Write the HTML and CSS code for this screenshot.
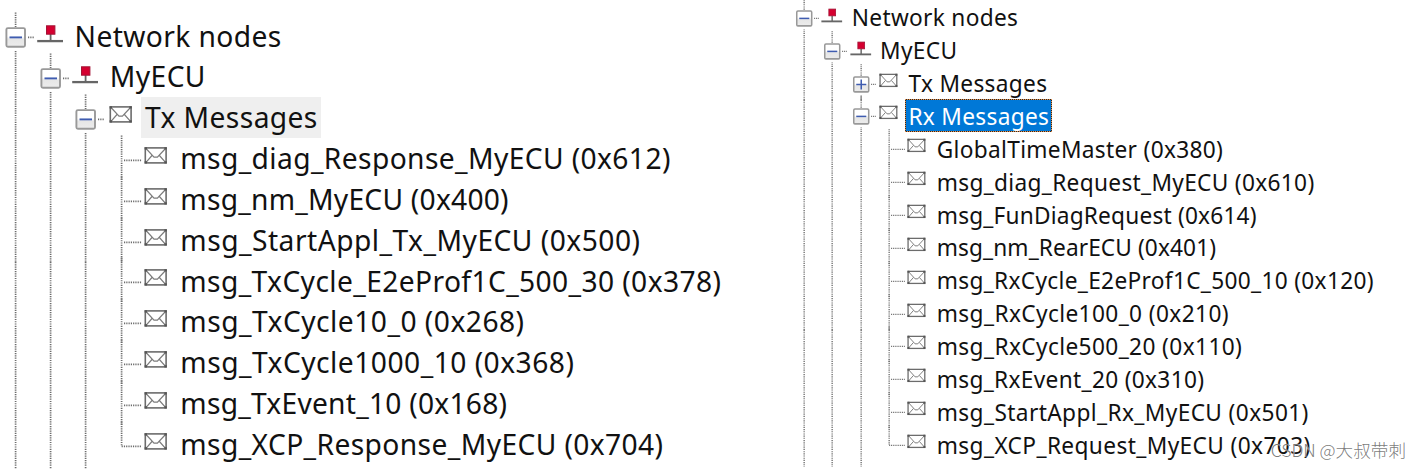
FILE: index.html
```
<!DOCTYPE html>
<html lang="en">
<head>
<meta charset="utf-8">
<title>Network nodes</title>
<link rel="stylesheet" href="styles.css">
</head>
<body>
<svg class="defs" width="0" height="0">
  <defs>
    <linearGradient id="face" x1="0" y1="0" x2="0" y2="1"><stop offset="0.45" stop-color="#fff"/><stop offset="0.6" stop-color="#e6e6e6"/><stop offset="1" stop-color="#ececec"/></linearGradient>
    <symbol id="line" viewBox="0 0 35.25 40.85" overflow="visible"><path class="dots" d="M17.6 0V40.85"/></symbol>
    <symbol id="leaf" viewBox="0 0 35.25 40.85" overflow="visible"><path class="dots" d="M17.6-4.54V40.85M20 20.4H37.5"/></symbol>
    <symbol id="last" viewBox="0 0 35.25 40.85" overflow="visible"><path class="dots" d="M17.6-4.54V20.4M17.6 20.4H37.5"/></symbol>
    <symbol id="minus" viewBox="0 0 35.25 40.85" overflow="visible"><path class="dots" d="M17.6-4.54V10M17.6 34.04V40.85M30 20.4H36"/><rect x="8.4" y="11.1" width="18.6" height="18.6" rx="1.5" fill="url(#face)" stroke="#999" stroke-width="1.9"/><path d="M11.5 20.4H24" stroke="#3f5cb0" stroke-width="1.9"/></symbol>
    <symbol id="plus" viewBox="0 0 35.25 40.85" overflow="visible"><path class="dots" d="M17.6-4.54V10M17.6 34.04V40.85M30 20.4H36"/><rect x="8.4" y="11.1" width="18.6" height="18.6" rx="1.5" fill="url(#face)" stroke="#999" stroke-width="1.9"/><path d="M11.5 20.4H24M17.7 14.2V26.6" stroke="#3f5cb0" stroke-width="1.9"/></symbol>
    <symbol id="node" viewBox="0 0 35.25 40.85" overflow="visible"><path d="M17.6 17V23.5" stroke="#666" stroke-width="1.8"/><path d="M4.2 24.1H30" stroke="#666" stroke-width="2.3"/><rect x="13.5" y="8.8" width="8.4" height="8.4" fill="#d50030" stroke="#a31335" stroke-width="1"/></symbol>
    <symbol id="mail" viewBox="0 0 35.25 40.85" overflow="visible"><rect x="6.3" y="7.9" width="20.8" height="15" fill="#fff" stroke="#6c6c6c" stroke-width="1.6"/><path d="M7 8.5L15 17.2H18.4L26.5 8.5M7 22.3L13 15.5M26.5 22.3L20.4 15.5" fill="none" stroke="#7c7c7c" stroke-width="1.2"/><path d="M5.6 7.2h2.4v2.4h-2.4zM25.4 7.2h2.4v2.4h-2.4zM5.6 21.2h2.4v2.4h-2.4zM25.4 21.2h2.4v2.4h-2.4z" fill="#555"/></symbol>
  </defs>
</svg>
<main class="page">
  <section class="tree tree-tx">
    <div class="row"><svg class="cell"><use href="#minus"/></svg><svg class="cell"><use href="#node"/></svg><span class="label">Network nodes</span></div>
    <div class="row"><svg class="cell"><use href="#line"/></svg><svg class="cell"><use href="#minus"/></svg><svg class="cell"><use href="#node"/></svg><span class="label">MyECU</span></div>
    <div class="row"><svg class="cell"><use href="#line"/></svg><svg class="cell"><use href="#line"/></svg><svg class="cell"><use href="#minus"/></svg><svg class="cell"><use href="#mail"/></svg><span class="label hover">Tx Messages</span></div>
    <div class="row"><svg class="cell"><use href="#line"/></svg><svg class="cell"><use href="#line"/></svg><svg class="cell"><use href="#line"/></svg><svg class="cell"><use href="#leaf"/></svg><svg class="cell"><use href="#mail"/></svg><span class="label">msg_diag_Response_MyECU (0x612)</span></div>
    <div class="row"><svg class="cell"><use href="#line"/></svg><svg class="cell"><use href="#line"/></svg><svg class="cell"><use href="#line"/></svg><svg class="cell"><use href="#leaf"/></svg><svg class="cell"><use href="#mail"/></svg><span class="label narrow">msg_nm_MyECU (0x400)</span></div>
    <div class="row"><svg class="cell"><use href="#line"/></svg><svg class="cell"><use href="#line"/></svg><svg class="cell"><use href="#line"/></svg><svg class="cell"><use href="#leaf"/></svg><svg class="cell"><use href="#mail"/></svg><span class="label wide">msg_StartAppl_Tx_MyECU (0x500)</span></div>
    <div class="row"><svg class="cell"><use href="#line"/></svg><svg class="cell"><use href="#line"/></svg><svg class="cell"><use href="#line"/></svg><svg class="cell"><use href="#leaf"/></svg><svg class="cell"><use href="#mail"/></svg><span class="label">msg_TxCycle_E2eProf1C_500_30 (0x378)</span></div>
    <div class="row"><svg class="cell"><use href="#line"/></svg><svg class="cell"><use href="#line"/></svg><svg class="cell"><use href="#line"/></svg><svg class="cell"><use href="#leaf"/></svg><svg class="cell"><use href="#mail"/></svg><span class="label wide">msg_TxCycle10_0 (0x268)</span></div>
    <div class="row"><svg class="cell"><use href="#line"/></svg><svg class="cell"><use href="#line"/></svg><svg class="cell"><use href="#line"/></svg><svg class="cell"><use href="#leaf"/></svg><svg class="cell"><use href="#mail"/></svg><span class="label wide">msg_TxCycle1000_10 (0x368)</span></div>
    <div class="row"><svg class="cell"><use href="#line"/></svg><svg class="cell"><use href="#line"/></svg><svg class="cell"><use href="#line"/></svg><svg class="cell"><use href="#leaf"/></svg><svg class="cell"><use href="#mail"/></svg><span class="label narrow">msg_TxEvent_10 (0x168)</span></div>
    <div class="row"><svg class="cell"><use href="#line"/></svg><svg class="cell"><use href="#line"/></svg><svg class="cell"><use href="#line"/></svg><svg class="cell"><use href="#last"/></svg><svg class="cell"><use href="#mail"/></svg><span class="label">msg_XCP_Response_MyECU (0x704)</span></div>
    <div class="row tail"><svg class="cell"><use href="#line"/></svg><svg class="cell"><use href="#line"/></svg><svg class="cell"><use href="#line"/></svg></div>
  </section>
  <section class="tree tree-rx">
    <div class="row"><svg class="cell"><use href="#minus"/></svg><svg class="cell"><use href="#node"/></svg><span class="label">Network nodes</span></div>
    <div class="row"><svg class="cell"><use href="#line"/></svg><svg class="cell"><use href="#minus"/></svg><svg class="cell"><use href="#node"/></svg><span class="label">MyECU</span></div>
    <div class="row"><svg class="cell"><use href="#line"/></svg><svg class="cell"><use href="#line"/></svg><svg class="cell"><use href="#plus"/></svg><svg class="cell"><use href="#mail"/></svg><span class="label">Tx Messages</span></div>
    <div class="row"><svg class="cell"><use href="#line"/></svg><svg class="cell"><use href="#line"/></svg><svg class="cell"><use href="#minus"/></svg><svg class="cell"><use href="#mail"/></svg><span class="label selected">Rx Messages</span></div>
    <div class="row"><svg class="cell"><use href="#line"/></svg><svg class="cell"><use href="#line"/></svg><svg class="cell"><use href="#line"/></svg><svg class="cell"><use href="#leaf"/></svg><svg class="cell"><use href="#mail"/></svg><span class="label">GlobalTimeMaster (0x380)</span></div>
    <div class="row"><svg class="cell"><use href="#line"/></svg><svg class="cell"><use href="#line"/></svg><svg class="cell"><use href="#line"/></svg><svg class="cell"><use href="#leaf"/></svg><svg class="cell"><use href="#mail"/></svg><span class="label">msg_diag_Request_MyECU (0x610)</span></div>
    <div class="row"><svg class="cell"><use href="#line"/></svg><svg class="cell"><use href="#line"/></svg><svg class="cell"><use href="#line"/></svg><svg class="cell"><use href="#leaf"/></svg><svg class="cell"><use href="#mail"/></svg><span class="label narrow">msg_FunDiagRequest (0x614)</span></div>
    <div class="row"><svg class="cell"><use href="#line"/></svg><svg class="cell"><use href="#line"/></svg><svg class="cell"><use href="#line"/></svg><svg class="cell"><use href="#leaf"/></svg><svg class="cell"><use href="#mail"/></svg><span class="label narrower">msg_nm_RearECU (0x401)</span></div>
    <div class="row"><svg class="cell"><use href="#line"/></svg><svg class="cell"><use href="#line"/></svg><svg class="cell"><use href="#line"/></svg><svg class="cell"><use href="#leaf"/></svg><svg class="cell"><use href="#mail"/></svg><span class="label">msg_RxCycle_E2eProf1C_500_10 (0x120)</span></div>
    <div class="row"><svg class="cell"><use href="#line"/></svg><svg class="cell"><use href="#line"/></svg><svg class="cell"><use href="#line"/></svg><svg class="cell"><use href="#leaf"/></svg><svg class="cell"><use href="#mail"/></svg><span class="label wide">msg_RxCycle100_0 (0x210)</span></div>
    <div class="row"><svg class="cell"><use href="#line"/></svg><svg class="cell"><use href="#line"/></svg><svg class="cell"><use href="#line"/></svg><svg class="cell"><use href="#leaf"/></svg><svg class="cell"><use href="#mail"/></svg><span class="label wide">msg_RxCycle500_20 (0x110)</span></div>
    <div class="row"><svg class="cell"><use href="#line"/></svg><svg class="cell"><use href="#line"/></svg><svg class="cell"><use href="#line"/></svg><svg class="cell"><use href="#leaf"/></svg><svg class="cell"><use href="#mail"/></svg><span class="label">msg_RxEvent_20 (0x310)</span></div>
    <div class="row"><svg class="cell"><use href="#line"/></svg><svg class="cell"><use href="#line"/></svg><svg class="cell"><use href="#line"/></svg><svg class="cell"><use href="#leaf"/></svg><svg class="cell"><use href="#mail"/></svg><span class="label wide">msg_StartAppl_Rx_MyECU (0x501)</span></div>
    <div class="row"><svg class="cell"><use href="#line"/></svg><svg class="cell"><use href="#line"/></svg><svg class="cell"><use href="#line"/></svg><svg class="cell"><use href="#last"/></svg><svg class="cell"><use href="#mail"/></svg><span class="label wide">msg_XCP_Request_MyECU (0x703)</span></div>
    <div class="row tail"><svg class="cell"><use href="#line"/></svg><svg class="cell"><use href="#line"/></svg><svg class="cell"><use href="#line"/></svg></div>
  </section>
  <div class="watermark">CSDN @大叔带刺</div>
</main>
</body>
</html>
```
FILE: styles.css
```
body {
  margin: 0;
  background: #fff;
  color: #111;
  font-family: "Noto Sans", "Open Sans", sans-serif;
  overflow: hidden;
}
.defs { position: absolute; }
.page {
  position: relative;
  display: grid;
  grid-template-columns: 789px 1fr;
  width: 1420px;
  height: 469px;
  overflow: hidden;
}
.tree { --u: 1px; --drop: 0px; }
.tree-tx { padding-top: 17.3px; margin-left: -2.1px; }
.tree-rx { --u: 0.8045px; --drop: 2.6px; padding-top: 1.9px; margin-left: 1.1px; }
.row {
  display: flex;
  height: calc(40.85 * var(--u));
}
.tail {
  height: 5px;
  overflow: hidden;
}
.cell {
  flex: none;
  width: calc(35.25 * var(--u));
  height: calc(40.85 * var(--u));
  overflow: visible;
}
.dots {
  fill: none;
  stroke: #6c6c6c;
  stroke-width: 1.7;
  stroke-dasharray: 1.2 1.0694;
}
.label {
  box-sizing: border-box;
  height: calc(40.5 * var(--u));
  margin-top: calc(-1.8 * var(--u));
  margin-left: calc(2.2 * var(--u));
  padding: 0 calc(3 * var(--u)) 0 calc(4 * var(--u));
  font-size: calc(28.2 * var(--u));
  line-height: calc(40.6 * var(--u) + var(--drop));
  letter-spacing: calc(0.39 * var(--u));
  white-space: nowrap;
}
.narrower { letter-spacing: calc(0.12 * var(--u)); }
.narrow { letter-spacing: calc(0.24 * var(--u)); }
.wide { letter-spacing: calc(0.48 * var(--u)); }
.hover { background: #efefef; }
.selected {
  color: #fff;
  background: #0078d7;
  border: 1px dotted #e8914a;
  padding: 0 calc(3 * var(--u) - 1px) 0 calc(4 * var(--u) - 1px);
  line-height: calc(40.6 * var(--u) + var(--drop) - 2px);
  background: linear-gradient(#0078d7, #0078d7) padding-box, #2a2a2a border-box;
}
.watermark {
  position: absolute;
  right: 14px;
  bottom: 7px;
  color: rgba(115, 115, 115, 0.95);
  font: 300 17.6px/24px "Noto Sans CJK SC", sans-serif;
  text-shadow: 0 0 1px #fff;
}
```
